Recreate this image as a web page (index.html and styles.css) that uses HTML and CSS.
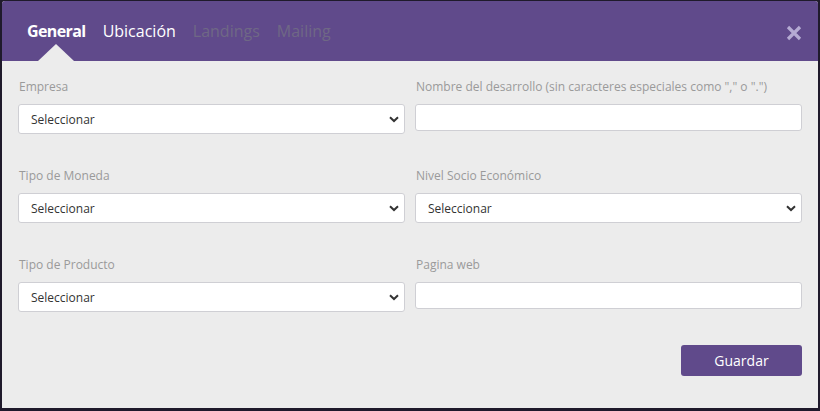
FILE: index.html
```html
<!DOCTYPE html>
<html lang="es">
<head>
    <meta charset="UTF-8">
    <meta name="viewport" content="width=device-width, initial-scale=1.0">
    <title>Desarrollo - General</title>
    <link rel="stylesheet" href="styles.css">
</head>
<body>
    <div class="modal">
        <div class="modal-header">
            <ul class="tabs">
                <li class="tab active">General</li>
                <li class="tab">Ubicación</li>
                <li class="tab disabled">Landings</li>
                <li class="tab disabled">Mailing</li>
            </ul>
            <button class="close" type="button" aria-label="Cerrar">
                <svg width="16" height="16" viewBox="0 0 16 16">
                    <path d="M2 2 L14 14 M14 2 L2 14" stroke="currentColor" stroke-width="3.2" stroke-linecap="butt"/>
                </svg>
            </button>
        </div>

        <form class="modal-body">
            <div class="form-grid">
                <div class="form-group">
                    <label for="empresa">Empresa</label>
                    <div class="select-wrap">
                        <select id="empresa"><option>Seleccionar</option></select>
                        <svg class="chevron" width="10" height="7" viewBox="0 0 10 7"><path d="M1 1.2 L5 5 L9 1.2" fill="none" stroke="currentColor" stroke-width="2"/></svg>
                    </div>
                </div>
                <div class="form-group">
                    <label for="nombre">Nombre del desarrollo (sin caracteres especiales como "," o ".")</label>
                    <input type="text" id="nombre">
                </div>

                <div class="form-group">
                    <label for="moneda">Tipo de Moneda</label>
                    <div class="select-wrap">
                        <select id="moneda"><option>Seleccionar</option></select>
                        <svg class="chevron" width="10" height="7" viewBox="0 0 10 7"><path d="M1 1.2 L5 5 L9 1.2" fill="none" stroke="currentColor" stroke-width="2"/></svg>
                    </div>
                </div>
                <div class="form-group">
                    <label for="nivel">Nivel Socio Económico</label>
                    <div class="select-wrap">
                        <select id="nivel"><option>Seleccionar</option></select>
                        <svg class="chevron" width="10" height="7" viewBox="0 0 10 7"><path d="M1 1.2 L5 5 L9 1.2" fill="none" stroke="currentColor" stroke-width="2"/></svg>
                    </div>
                </div>

                <div class="form-group">
                    <label for="producto">Tipo de Producto</label>
                    <div class="select-wrap">
                        <select id="producto"><option>Seleccionar</option></select>
                        <svg class="chevron" width="10" height="7" viewBox="0 0 10 7"><path d="M1 1.2 L5 5 L9 1.2" fill="none" stroke="currentColor" stroke-width="2"/></svg>
                    </div>
                </div>
                <div class="form-group">
                    <label for="web">Pagina web</label>
                    <input type="text" id="web">
                </div>
            </div>

            <div class="actions">
                <button type="submit" class="btn-save">Guardar</button>
            </div>
        </form>
    </div>
</body>
</html>
```

FILE: styles.css
```css
:root {
    --page-bg: #1f1a2b;
    --header-bg: #604a8b;
    --body-bg: #ececec;
    --label-color: #9a9a9a;
    --text-color: #333;
    --border-color: #cfcfd4;
    --tab-disabled: #6f6885;
    --close-color: #b5abd3;
}

body {
    margin: 0;
    padding: 1px 2px;
    background-color: var(--page-bg);
    font-family: 'Open Sans', 'Liberation Sans', sans-serif;
    height: 411px;
    box-sizing: border-box;
    overflow: hidden;
}
.modal {
    width: 816px;
    height: 407px;
    background-color: var(--body-bg);
    border-radius: 3px 3px 0 0;
    overflow: hidden;
    display: flex;
    flex-direction: column;
}
.modal-header {
    height: 60px;
    background-color: var(--header-bg);
    display: flex;
    align-items: center;
    justify-content: space-between;
    padding: 0 16px 0 25px;
    box-sizing: border-box;
}
.tabs {
    list-style: none;
    margin: 0;
    padding: 0;
    display: flex;
    gap: 17px;
    height: 100%;
}
.tab {
    position: relative;
    color: #fff;
    font-size: 16px;
    line-height: 60px;
    padding-bottom: 5px;
}
.tab.active {
    font-weight: 700;
    letter-spacing: -0.6px;
}
.tab.active::after {
    content: "";
    position: absolute;
    left: 50%;
    bottom: 0;
    margin-left: -18px;
    border-left: 18px solid transparent;
    border-right: 18px solid transparent;
    border-bottom: 17px solid var(--body-bg);
}
.tab.disabled {
    color: var(--tab-disabled);
}
.close {
    background: none;
    border: none;
    padding: 0;
    margin-top: 4px;
    color: var(--close-color);
    cursor: pointer;
    display: flex;
}
.modal-body {
    padding: 17px 16px 0 16px;
    margin: 0;
}
.form-grid {
    display: grid;
    grid-template-columns: 387px 387px;
    column-gap: 10px;
    row-gap: 33px;
}
.form-group label {
    display: block;
    font-size: 12px;
    line-height: 17px;
    color: var(--label-color);
    margin-bottom: 9px;
    padding-left: 1px;
}
.select-wrap {
    position: relative;
}
select, input[type="text"] {
    width: 100%;
    box-sizing: border-box;
    border: 1px solid var(--border-color);
    border-radius: 3px;
    background-color: #fff;
    font-family: inherit;
    font-size: 12px;
    color: var(--text-color);
    outline: none;
}
select {
    -webkit-appearance: none;
    appearance: none;
    height: 30px;
    padding: 0 24px 0 12px;
}
input[type="text"] {
    height: 27px;
    padding: 0 12px;
}
.chevron {
    position: absolute;
    right: 6px;
    top: 12px;
    color: #333;
    pointer-events: none;
}
.actions {
    display: flex;
    justify-content: flex-end;
    margin-top: 33px;
}
.btn-save {
    width: 121px;
    height: 31px;
    border: none;
    border-radius: 3px;
    background-color: var(--header-bg);
    color: #fff;
    font-family: inherit;
    font-size: 14px;
    cursor: pointer;
}
```
